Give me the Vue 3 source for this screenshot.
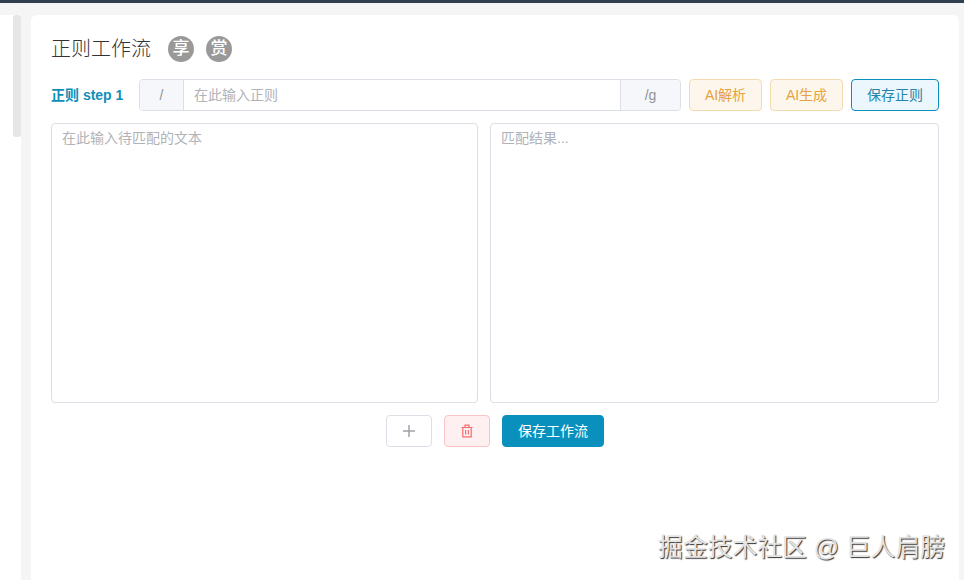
<script setup>
const badges = ['享', '赏']
</script>

<template>
  <div class="page">
    <div class="topbar"></div>
    <div class="body">
      <aside class="side"><div class="thumb"></div></aside>
      <main class="main">
        <section class="card">
          <header class="head">
            <h1 class="title">正则工作流</h1>
            <span v-for="b in badges" :key="b" class="badge">{{ b }}</span>
          </header>
          <div class="row">
            <span class="step">正则 step 1</span>
            <div class="group">
              <span class="addon addon-l">/</span>
              <input class="regex" placeholder="在此输入正则" />
              <span class="addon addon-r">/g</span>
            </div>
            <button class="btn warn">AI解析</button>
            <button class="btn warn">AI生成</button>
            <button class="btn save">保存正则</button>
          </div>
          <div class="panes">
            <textarea class="pane pane-l" placeholder="在此输入待匹配的文本"></textarea>
            <textarea class="pane pane-r" placeholder="匹配结果..."></textarea>
          </div>
          <div class="actions">
            <button class="btn icon plain" aria-label="添加">
              <svg width="14" height="14" viewBox="0 0 14 14"><path d="M7 1v12M1 7h12" stroke="currentColor" stroke-width="1.5" fill="none"/></svg>
            </button>
            <button class="btn icon danger" aria-label="删除">
              <svg width="14" height="14" viewBox="0 0 14 14" fill="none" stroke="currentColor" stroke-width="1.2"><path d="M1.5 3.5h11M5 3.5V1.2h4v2.3M2.8 3.5v9.3h8.4V3.5M5.6 6v4.5M8.4 6v4.5"/></svg>
            </button>
            <button class="btn primary">保存工作流</button>
          </div>
          <div class="watermark">掘金技术社区 @ 巨人肩膀</div>
        </section>
      </main>
    </div>
  </div>
</template>

<style>
html, body { margin: 0; padding: 0; overflow: hidden; }
</style>

<style scoped>
.page {
  width: 964px;
  height: 580px;
  display: flex;
  flex-direction: column;
  background: #f5f5f6;
  overflow: hidden;
  font-family: "Liberation Sans", "Noto Sans CJK SC", sans-serif;
}
.topbar { height: 3px; background: #304050; flex: none; }
.body { flex: 1; display: flex; min-height: 0; padding-top: 12px; }
.side { width: 21px; flex: none; background: #fff; padding-left: 13px; box-sizing: border-box; }
.thumb { width: 8px; height: 122px; border-radius: 3px; background: #e6e6e6; }
.main { flex: 1; padding: 0 5px 0 10px; min-width: 0; }
.card {
  position: relative;
  height: 100%;
  box-sizing: border-box;
  background: #fff;
  border-radius: 6px 6px 0 0;
  padding: 20px 20px 0;
}
.head { display: flex; align-items: center; height: 28px; margin-bottom: 16px; }
.title { margin: 0 17px 0 0; font-size: 20px; font-weight: 300; color: #333; line-height: 28px; width: 100px; white-space: nowrap; }
.badge {
  width: 26px;
  height: 26px;
  border-radius: 50%;
  background: #999;
  color: #fff;
  font-size: 17px;
  font-weight: 500;
  line-height: 26px;
  text-align: center;
  margin-right: 12px;
}
.row { display: flex; align-items: center; height: 32px; gap: 8px; margin-bottom: 12px; }
.step { width: 80px; font-size: 14px; font-weight: 700; color: #0f8fb8; white-space: nowrap; line-height: 32px; height: 32px; }
.group { display: flex; width: 542px; height: 32px; box-sizing: border-box; border: 1px solid #dcdfe6; border-radius: 4px; overflow: hidden; }
.addon { background: #f5f7fa; color: #909399; font-size: 14px; line-height: 30px; text-align: center; flex: none; }
.addon-l { width: 43px; border-right: 1px solid #dcdfe6; }
.addon-r { width: 59px; border-left: 1px solid #dcdfe6; }
.regex { flex: 1; min-width: 0; border: 0; outline: 0; padding: 0 10px; font: inherit; font-size: 14px; color: #606266; }
.regex::placeholder, .pane::placeholder { color: #b0b3b9; opacity: 1; }
.btn {
  height: 32px;
  box-sizing: border-box;
  border-radius: 4px;
  border: 1px solid #dcdfe6;
  background: #fff;
  font: inherit;
  font-size: 14px;
  line-height: 1;
  padding: 0;
  display: inline-flex;
  align-items: center;
  justify-content: center;
  flex: none;
}
.warn { width: 73px; background: #fdf6ec; border-color: #f5dab1; color: #e6a23c; }
.save { width: 88px; background: #ecf6fd; border-color: #0a90bc; color: #2585a8; }
.panes { display: flex; gap: 12px; height: 280px; }
.pane {
  display: block;
  height: 100%;
  box-sizing: border-box;
  border: 1px solid #dcdfe6;
  border-radius: 4px;
  padding: 4px 10px;
  margin: 0;
  resize: none;
  outline: 0;
  font: inherit;
  font-size: 14px;
  line-height: 20px;
}
.pane-l { width: 427px; }
.pane-r { width: 449px; }
.actions { display: flex; justify-content: center; gap: 12px; margin-top: 12px; }
.icon { width: 46px; }
.plain { color: #a0a3a8; }
.danger { background: #fef0f0; border-color: #fbc4c4; color: #f56c6c; }
.primary { width: 102px; background: #0a90bc; border-color: #0a90bc; color: #fff; }
.watermark {
  position: absolute;
  right: 14px;
  top: 518px;
  font-size: 24.8px;
  line-height: 30px;
  color: #e4e4e4;
  white-space: nowrap;
  text-shadow: 1px 1px 1px #333;
}
</style>
